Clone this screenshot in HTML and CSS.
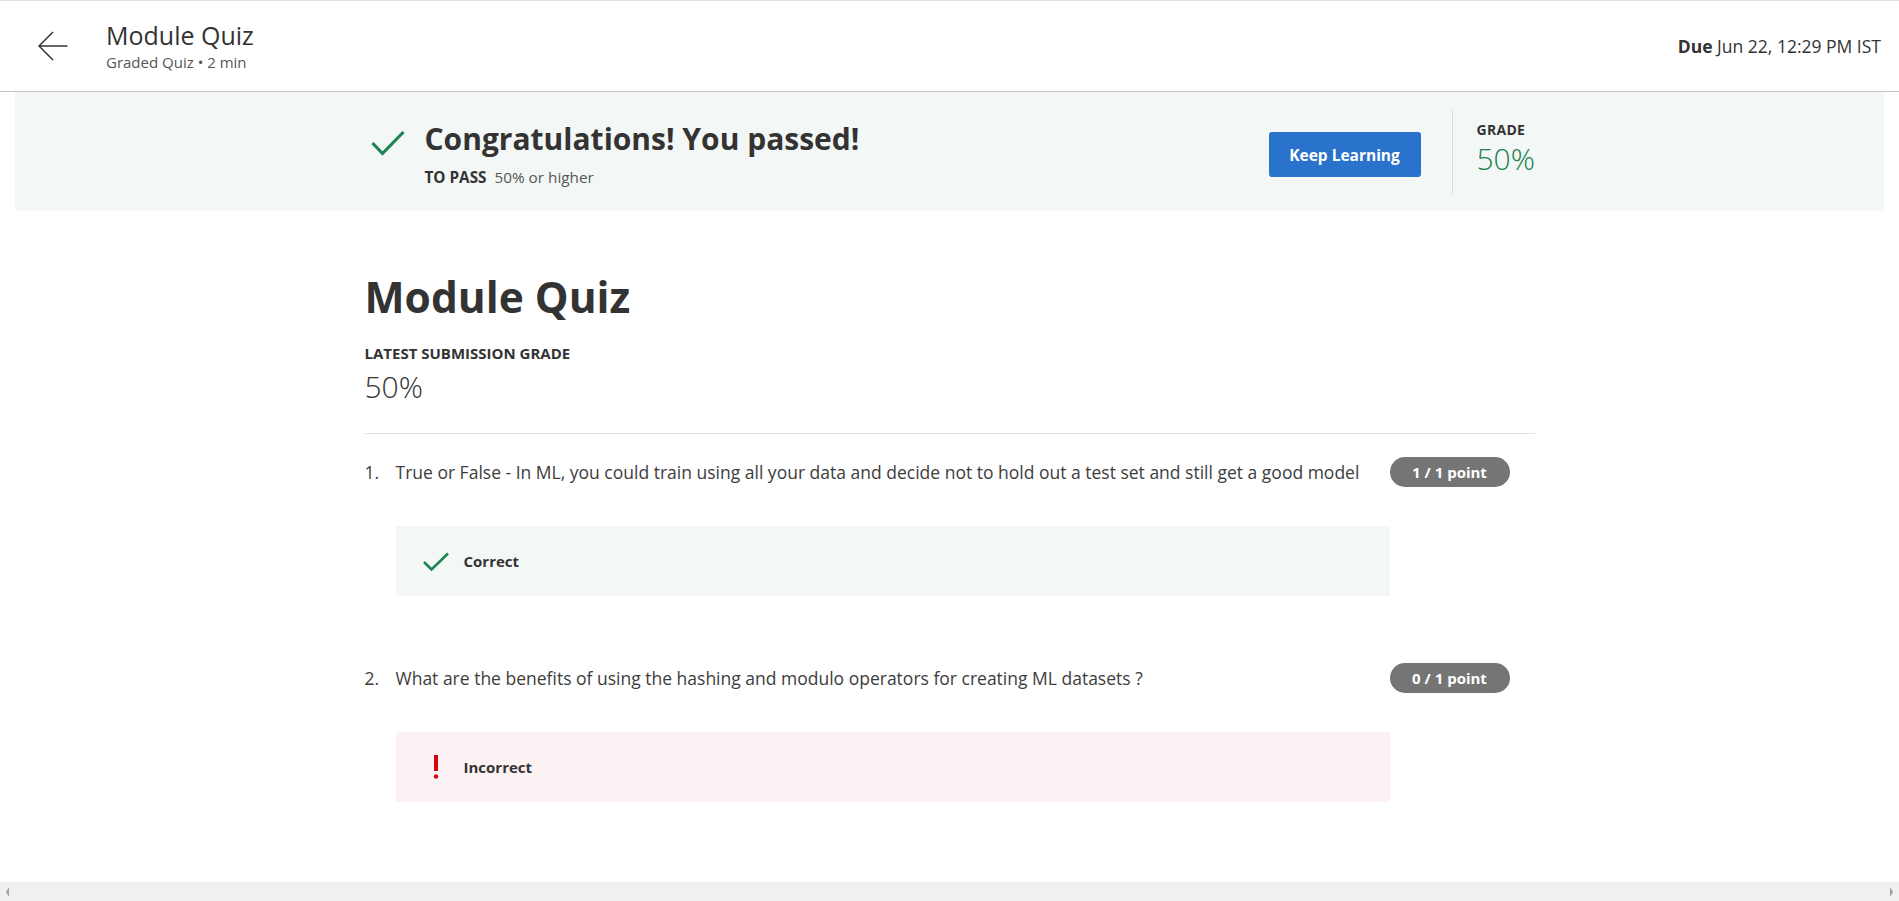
FILE: index.html
```html
<!DOCTYPE html>
<html lang="en">
<head>
<meta charset="utf-8">
<title>Module Quiz</title>
<link rel="stylesheet" href="styles.css">
</head>
<body>
<header class="topbar">
  <div class="topbar-left">
    <button class="back" aria-label="Back">
      <svg width="30" height="30" viewBox="0 0 30 30"><path d="M29.5 15H1.2M15 1L1 15l14 14" fill="none" stroke="#333" stroke-width="1.5"/></svg>
    </button>
    <div class="titles">
      <div class="title">Module Quiz</div>
      <div class="subtitle">Graded Quiz • 2 min</div>
    </div>
  </div>
  <div class="due"><b>Due</b> Jun 22, 12:29 PM IST</div>
</header>

<section class="banner">
  <div class="container banner-inner">
    <div class="pass">
      <svg class="pass-icon" width="34" height="26" viewBox="0 0 34 26"><polyline points="1.5,13 11.5,23.5 32.5,2" fill="none" stroke="#1f8354" stroke-width="3.2"/></svg>
      <div class="pass-text">
        <h2 class="pass-title">Congratulations! You passed!</h2>
        <div class="to-pass"><b>TO PASS</b> 50% or higher</div>
      </div>
    </div>
    <div class="actions">
      <button class="btn-keep">Keep Learning</button>
      <div class="vdivider"></div>
      <div class="grade">
        <div class="grade-label">GRADE</div>
        <div class="grade-value">50%</div>
      </div>
    </div>
  </div>
</section>

<main class="container content">
  <h1 class="quiz-title">Module Quiz</h1>
  <div class="latest-label">LATEST SUBMISSION GRADE</div>
  <div class="latest-value">50%</div>
  <hr class="rule">

  <div class="question first">
    <div class="q-num">1.</div>
    <div class="q-text">True or False - In ML, you could train using all your data and decide not to hold out a test set and still get a good model</div>
    <div class="q-badge">1 / 1 point</div>
    <div class="feedback correct">
      <svg class="fb-icon" width="26" height="19" viewBox="0 0 26 19"><polyline points="1,10 8.5,17.5 25,1.5" fill="none" stroke="#1f8354" stroke-width="2.6"/></svg>
      <span class="fb-label">Correct</span>
    </div>
  </div>

  <div class="question">
    <div class="q-num">2.</div>
    <div class="q-text">What are the benefits of using the hashing and modulo operators for creating ML datasets ?</div>
    <div class="q-badge">0 / 1 point</div>
    <div class="feedback incorrect">
      <svg class="fb-icon" width="26" height="24" viewBox="0 0 26 24"><rect x="11" y="0" width="4" height="16" fill="#d10a11"/><circle cx="13" cy="21.5" r="2.2" fill="#d10a11"/></svg>
      <span class="fb-label">Incorrect</span>
    </div>
  </div>
</main>

<div class="hscroll"><span class="arrow left"></span><span class="arrow right"></span></div>
</body>
</html>
```
FILE: styles.css
```css
* { box-sizing: border-box; }
html, body { height: 100%; }
body {
  margin: 0;
  font-family: "Open Sans", "Noto Sans", sans-serif;
  color: #333;
  background: #fff;
  overflow: hidden;
}

.topbar {
  display: flex;
  align-items: center;
  justify-content: space-between;
  height: 92px;
  border-top: 1px solid #e2e2e2;
  border-bottom: 1px solid #c6c6c6;
  padding: 0 18px 0 38px;
}
.topbar-left { display: flex; align-items: center; gap: 38px; }
.back {
  width: 30px; height: 30px; padding: 0; border: 0; background: none; cursor: pointer;
}
.back svg { display: block; }
.title { font-size: 25px; line-height: 30px; color: #333; }
.subtitle { font-size: 15px; line-height: 20px; margin-top: 2px; color: #555; }
.due { font-size: 17.5px; line-height: 24px; color: #333; }
.due b { font-weight: 700; }

.banner { margin: 0 15px; height: 119px; background: #f3f8f6; }
.container { width: 1170px; margin: 0 auto; }
.banner-inner { display: flex; height: 119px; }
.pass { display: flex; align-items: flex-start; }
.pass-icon { margin: 38px 0 0 6px; display: block; }
.pass-text { margin-left: 20px; padding-top: 29px; }
.pass-title { margin: 0; font-size: 30px; line-height: 36px; font-weight: 700; color: #333; }
.to-pass { margin-top: 10px; font-size: 15.3px; line-height: 20px; color: #555; }
.to-pass b { color: #333; margin-right: 4px; }

.actions { margin-left: auto; display: flex; align-items: flex-start; }
.btn-keep {
  margin-top: 40px; width: 152px; height: 45px;
  background: #2a73cc; color: #fff; border: 0; border-radius: 3px;
  font-family: inherit; font-size: 15.5px; font-weight: 700;
}
.vdivider { width: 1px; height: 84px; margin: 18px 24px 0 31px; background: #dcdede; }
.grade { width: 58px; margin-top: 29px; }
.grade-label { font-size: 14px; line-height: 17px; font-weight: 700; color: #333; letter-spacing: 0.3px; }
.grade-value { margin-top: 4px; font-size: 30px; line-height: 34px; font-weight: 300; color: #1a7f4f; }

.content { padding-top: 60px; }
.quiz-title { margin: 0; font-size: 42.5px; line-height: 52px; font-weight: 700; color: #333; }
.latest-label { margin-top: 20px; font-size: 15px; line-height: 20px; font-weight: 700; color: #333; }
.latest-value { margin-top: 6px; font-size: 30px; line-height: 36px; font-weight: 300; color: #333; }
.rule { margin: 28px 0 0; border: 0; border-top: 1px solid #e1e1e1; height: 0; }

.question {
  display: grid;
  grid-template-columns: 31px 994px 120px;
  align-items: center;
  margin-top: 67px;
}
.question.first { margin-top: 23px; }
.q-num, .q-text { font-size: 17.5px; line-height: 24px; color: #3d3d3d; }
.q-badge {
  height: 30px; border-radius: 15px; background: #757575; color: #fff;
  font-size: 15px; font-weight: 700;
  display: flex; align-items: center; justify-content: center;
}
.feedback {
  grid-column: 2;
  margin-top: 39px;
  height: 70px;
  display: flex; align-items: center;
  padding-left: 27px;
}
.feedback.correct { background: #f3f8f6; }
.feedback.incorrect { background: #fdf2f3; }
.fb-icon { display: block; width: 26px; margin-right: 15px; }
.fb-label { font-size: 15px; font-weight: 700; color: #333; }

.hscroll {
  position: fixed; left: 0; right: 0; bottom: 0; height: 19px;
  background: #f0f0f0;
  display: flex; align-items: center; justify-content: space-between;
  padding: 0 6px;
}
.arrow { width: 0; height: 0; border-top: 5px solid transparent; border-bottom: 5px solid transparent; }
.arrow.left { border-right: 3px solid #a0a0a0; }
.arrow.right { border-left: 3px solid #a0a0a0; }
```
